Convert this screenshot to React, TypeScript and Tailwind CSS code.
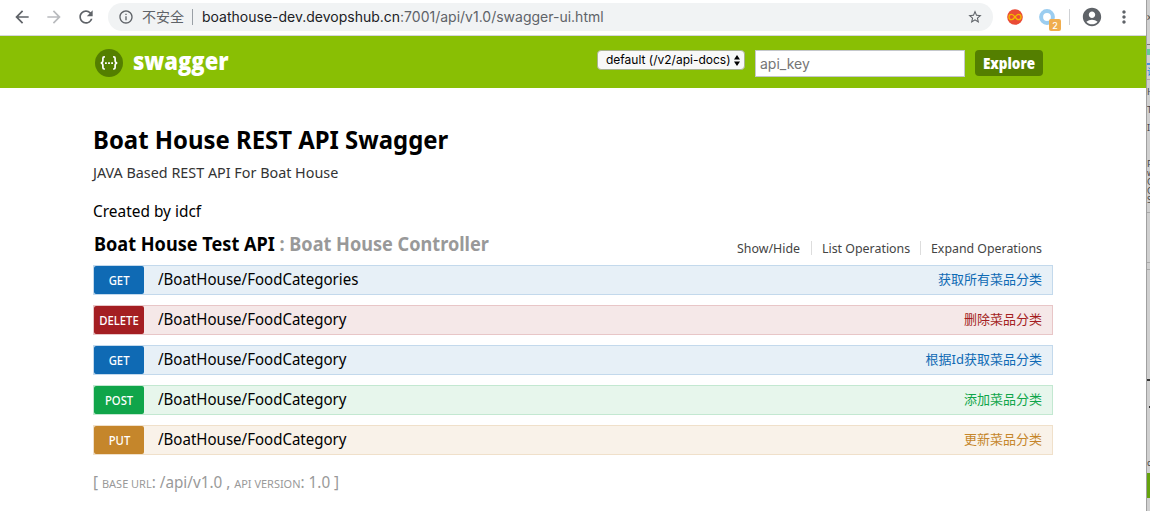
import { MdArrowBack, MdArrowForward, MdRefresh, MdInfoOutline, MdStarBorder, MdAccountCircle, MdMoreVert } from "react-icons/md";

const operations = [
  { method: "GET", path: "/BoatHouse/FoodCategories", note: "获取所有菜品分类", badge: "bg-[#0f6ab4]", row: "bg-[#e7f0f7] border-[#c3d9ec]", text: "text-[#0f6ab4]" },
  { method: "DELETE", path: "/BoatHouse/FoodCategory", note: "删除菜品分类", badge: "bg-[#a41e22]", row: "bg-[#f5e8e8] border-[#e8c6c7]", text: "text-[#a41e22]" },
  { method: "GET", path: "/BoatHouse/FoodCategory", note: "根据Id获取菜品分类", badge: "bg-[#0f6ab4]", row: "bg-[#e7f0f7] border-[#c3d9ec]", text: "text-[#0f6ab4]" },
  { method: "POST", path: "/BoatHouse/FoodCategory", note: "添加菜品分类", badge: "bg-[#10a54a]", row: "bg-[#e7f6ec] border-[#c3e8d1]", text: "text-[#10a54a]" },
  { method: "PUT", path: "/BoatHouse/FoodCategory", note: "更新菜品分类", badge: "bg-[#c5862b]", row: "bg-[#f9f2e9] border-[#f0e0ca]", text: "text-[#c5862b]" },
];

function BrowserBar() {
  return (
    <div className="flex h-9 items-center border-b border-[#d5d7da] bg-white pb-px font-['Inter','Noto_Sans_CJK_SC',sans-serif] text-[#5f6368]">
      <MdArrowBack className="ml-3 size-5" />
      <MdArrowForward className="ml-3 size-5 text-[#b9bbbe]" />
      <MdRefresh className="ml-3 size-5" />
      <div className="ml-3 flex h-7 w-[885px] shrink-0 items-center rounded-full bg-[#f1f3f4]">
        <MdInfoOutline className="ml-[10px] size-4 shrink-0" />
        <span className="ml-2 text-[14px] leading-none">不安全</span>
        <span className="ml-2 h-4 w-px bg-[#9aa0a6]" />
        <span className="ml-[9px] pb-[2px] whitespace-nowrap text-[14px]">
          <span className="text-[#202124]">boathouse-dev.devopshub.cn</span>:7001/api/v1.0/swagger-ui.html
        </span>
        <MdStarBorder className="mr-[10px] ml-auto size-4" />
      </div>
      <svg className="ml-[14px] size-4 shrink-0" viewBox="0 0 16 16">
        <circle cx="8" cy="8" r="7.8" fill="#ea4b35" />
        <path d="M8 8C6.5 6 5.8 5.3 4.6 5.3a2.7 2.7 0 0 0 0 5.4C5.8 10.7 6.500 10 8 8s2.200-2.700 3.400-2.700a2.700 2.700 0 0 1 0 5.400C10.200 10.700 9.500 10 8 8z" fill="none" stroke="#f5b800" strokeWidth="1.300" />
      </svg>
      <div className="relative ml-4 size-4 shrink-0">
        <svg className="size-4" viewBox="0 0 16 16">
          <circle cx="8" cy="8" r="5.900" fill="none" stroke="#9bcdf0" strokeWidth="4" />
        </svg>
        <span className="absolute top-[10px] left-[10px] flex h-3 w-3 items-center justify-center rounded-[2px] bg-[#f0ad4e] text-[9px] leading-none font-medium text-white">2</span>
      </div>
      <span className="ml-[14px] h-4 w-px bg-[#cfd1d4]" />
      <MdAccountCircle className="ml-[11px] size-[22px] shrink-0" />
      <MdMoreVert className="ml-[11px] size-5 shrink-0" />
    </div>
  );
}

function Header() {
  return (
    <header className="flex h-[52px] items-start bg-[#89bf04] pl-[95px]">
      <svg className="mt-[13px] size-7" viewBox="0 0 28 28">
        <circle cx="14" cy="14" r="14" fill="#547f00" />
        <path d="M9.900 7.900H9.200Q7.900 7.900 7.900 9.300V11.500Q7.900 13.700 5.800 14Q7.900 14.300 7.900 16.500V18.600Q7.900 20 9.200 20H9.900M18.100 7.900H18.800Q20.100 7.900 20.100 9.300V11.500Q20.100 13.700 22.200 14Q20.100 14.300 20.100 16.500V18.600Q20.100 20 18.800 20H18.100" fill="none" stroke="#fff" strokeWidth="1.700" />
        <path d="M10 13.200h1.800v1.800H10zM13.100 13.200h1.800v1.800h-1.800zM16.200 13.200H18v1.800h-1.800z" fill="#fff" />
      </svg>
      <div className="mt-[7px] ml-[10px] w-[464px]">
        <span className="inline-block origin-left scale-x-[0.915] font-['Open_Sans',sans-serif] text-[24px] leading-9 font-extrabold text-white">swagger</span>
      </div>
      <div className="mt-[14px] flex h-5 w-[148px] items-center justify-between rounded-[4px] border border-[#a9b38f] bg-[#f8f8f8] pr-1 pl-2 font-['Inter',sans-serif] text-[12px] text-black">
        default (/v2/api-docs)
        <svg className="h-[11px] w-[6px]" viewBox="0 0 6 11"><path d="M3 0L6 4.500H0zM3 11L0 6.500H6z" /></svg>
      </div>
      <div className="mt-[14px] ml-[10px] flex h-[27px] w-[210px] items-center border border-[#c5c8cc] bg-white pl-1 font-['Inter',sans-serif] text-[14px] text-[#757575]">api_key</div>
      <button className="mt-[14px] ml-[10px] flex h-[26px] w-[68px] justify-center rounded-[4px] bg-[#547f00] font-['Open_Sans',sans-serif] text-[15px] leading-[26px] font-extrabold text-white">
        <span className="scale-x-[0.9]">Explore</span>
      </button>
    </header>
  );
}

function Backdrop() {
  return (
    <aside className="flex w-1 shrink-0 flex-col overflow-hidden border-l border-[#a0a0a0] bg-[#d0d0d0] text-[9px] leading-[9px] text-[#444] *:shrink-0">
      <span className="mt-3 h-[32px]">x</span>
      <span className="h-px bg-[#777]" />
      <span className="mt-1 h-[6px] bg-[#67c99a]" />
      <span className="mt-2 h-[2px] bg-[#4a90d9]" />
      <span className="mt-[2px] h-[13px] border-b border-[#aaa] text-[#1682d9]">设</span>
      <span className="mt-[7px]">H</span>
      <span className="mt-[9px]">T</span>
      <span className="mt-[9px]">I</span>
      <span className="mt-[27px]">P</span>
      <span>w</span>
      <span>C</span>
      <span>C</span>
      <span>S</span>
      <span className="mt-[8px] h-[51px] border-t border-b border-[#aaa]" />
      <span className="mt-[6px] h-[112px] border-t border-b-2 border-t-[#aaa] border-b-[#333]" />
      <span className="mt-[25px] ml-[2px] h-[2px] bg-[#333]" />
      <span className="mt-[50px]">ch</span>
      <span className="mt-[6px] h-[25px] bg-[#65a30d]" />
    </aside>
  );
}

export default function App() {
  return (
    <div className="flex h-[511px] w-[1150px] overflow-hidden bg-white font-['Noto_Sans','Noto_Sans_CJK_SC',sans-serif]">
      <div className="w-[1146px] shrink-0">
        <BrowserBar />
        <Header />
        <main className="ml-[93px] w-[960px] pt-[34px]">
          <h1 className="h-[34px] origin-left scale-x-[0.956] text-[25px] leading-[34px] font-bold whitespace-nowrap">Boat House REST API Swagger</h1>
          <p className="mt-[5px] h-[22px] origin-left scale-x-[0.957] text-[15px] leading-[22px] text-[#333]">JAVA Based REST API For Boat House</p>
          <p className="mt-[16px] h-6 origin-left scale-x-[0.964] text-[16px] leading-6 text-black">Created by idcf</p>
          <div className="mt-[9px] flex h-6 items-center justify-between pr-[11px] pl-px">
            <h2 className="origin-left scale-x-[0.953] text-[19px] leading-6 font-bold whitespace-nowrap text-black">Boat House Test API <span className="text-[#999]">: Boat House Controller</span></h2>
            <ul className="mt-[8px] flex h-4 items-center text-[13px] leading-[14px] font-[450] whitespace-nowrap text-[#444]">
              <li className="w-[74px]"><span className="inline-block origin-left scale-x-[0.953]">Show/Hide</span></li>
              <li className="w-[110px] border-x border-[#ddd] pl-[10px]"><span className="inline-block origin-left scale-x-[0.953]">List Operations</span></li>
              <li className="w-[121px] pl-[10px]"><span className="inline-block origin-left scale-x-[0.95]">Expand Operations</span></li>
            </ul>
          </div>
          <ul className="mt-[9px] flex flex-col gap-[10px]">
            {operations.map((op, i) => (
              <li key={i} className={`flex h-[30px] items-center border ${op.row}`}>
                <span className={`flex h-7 w-[50px] items-center justify-center rounded-[2px] pt-px text-[12px] font-medium text-white ${op.badge}`}>
                  <span className="scale-x-[0.94]">{op.method}</span>
                </span>
                <span className="ml-[14px] origin-left scale-x-[0.94] pb-[2px] text-[16px] text-black">{op.path}</span>
                <span className={`mr-[10px] ml-auto text-[13px] ${op.text}`}>{op.note}</span>
              </li>
            ))}
          </ul>
          <p className="mt-[15px] h-6 origin-left scale-x-[0.953] text-[16px] leading-6 text-[#999]">
            [ <span className="text-[11.500px]">BASE URL</span>: /api/v1.0 , <span className="text-[11.500px]">API VERSION</span>: 1.0 ]
          </p>
        </main>
      </div>
      <Backdrop />
    </div>
  );
}
